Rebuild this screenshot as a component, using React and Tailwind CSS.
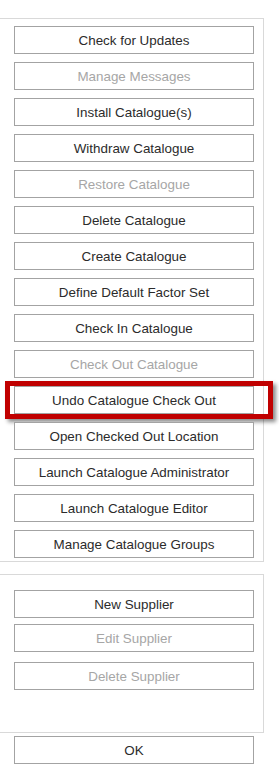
import React from "react";

const catalogueActions = [
  { label: "Check for Updates" },
  { label: "Manage Messages", disabled: true },
  { label: "Install Catalogue(s)" },
  { label: "Withdraw Catalogue" },
  { label: "Restore Catalogue", disabled: true },
  { label: "Delete Catalogue" },
  { label: "Create Catalogue" },
  { label: "Define Default Factor Set" },
  { label: "Check In Catalogue" },
  { label: "Check Out Catalogue", disabled: true },
  { label: "Undo Catalogue Check Out", highlight: true },
  { label: "Open Checked Out Location" },
  { label: "Launch Catalogue Administrator" },
  { label: "Launch Catalogue Editor" },
  { label: "Manage Catalogue Groups" },
];

const ActionButton = ({ label, disabled, highlight, className = "" }) => (
  <div className={`relative ${className}`}>
    <button
      disabled={disabled}
      className={`w-[240px] h-[28px] block text-center border border-[#a3a3a3] bg-white text-[13.4px] leading-[27px] ${
        disabled ? "text-[#a6a6a6]" : "text-[#2b2b2b]"
      }`}
    >
      {label}
    </button>
    {highlight && (
      <div className="absolute left-[-9px] right-[-10px] top-[-5px] bottom-[-5px] border-[5px] border-[#c00000] shadow-[3px_3px_4px_rgba(0,0,0,0.45)] pointer-events-none" />
    )}
  </div>
);

export default function App() {
  return (
    <div
      className="w-[279px] h-[781px] bg-white pt-[18px]"
      style={{ fontFamily: '"Liberation Sans", Arial, sans-serif' }}
    >
      <div className="w-[264px] border-t border-r border-b border-[#d9d9d9] pl-[14px] pt-[7px] pb-[3px] flex flex-col gap-[8px]">
        {catalogueActions.map((a) => (
          <ActionButton key={a.label} {...a} />
        ))}
      </div>

      <div className="w-[264px] h-[159px] mt-[12px] border-t border-r border-b border-[#d9d9d9] pl-[14px] pt-[15px] flex flex-col">
        <ActionButton label="New Supplier" />
        <ActionButton label="Edit Supplier" disabled className="mt-[6px]" />
        <ActionButton label="Delete Supplier" disabled className="mt-[10px]" />
      </div>

      <div className="pl-[14px] mt-[3px]">
        <ActionButton label="OK" />
      </div>
    </div>
  );
}
